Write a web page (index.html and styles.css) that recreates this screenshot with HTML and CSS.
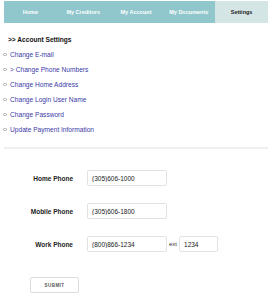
FILE: index.html
```html
<!DOCTYPE html>
<html>
<head>
<meta charset="utf-8">
<link rel="stylesheet" href="styles.css">
</head>
<body>
<nav class="nav">
  <a class="tab">Home</a>
  <a class="tab">My Creditors</a>
  <a class="tab">My Account</a>
  <a class="tab">My Documents</a>
  <a class="tab active">Settings</a>
</nav>
<section class="menu">
  <div class="menu-title">&gt;&gt; Account Settings</div>
  <ul class="links">
    <li><a>Change E-mail</a></li>
    <li><a>&gt; Change Phone Numbers</a></li>
    <li><a>Change Home Address</a></li>
    <li><a>Change Login User Name</a></li>
    <li><a>Change Password</a></li>
    <li><a>Update Payment Information</a></li>
  </ul>
</section>
<hr class="divider">
<form class="form">
  <div class="row">
    <label class="label">Home Phone</label>
    <input class="field" value="(305)606-1000">
  </div>
  <div class="row">
    <label class="label">Mobile Phone</label>
    <input class="field" value="(305)606-1800">
  </div>
  <div class="row">
    <label class="label">Work Phone</label>
    <input class="field" value="(800)866-1234">
    <span class="ext">ext</span>
    <input class="field small" value="1234">
  </div>
  <button type="button" class="submit">SUBMIT</button>
</form>
</body>
</html>
```
FILE: styles.css
```css
html, body { margin: 0; padding: 0; background: #fff; }
body { font-family: "Liberation Sans", Arial, sans-serif; color: #222; }

.nav {
  display: grid;
  grid-template-columns: repeat(5, 1fr);
  margin: 1px 3px 0 4px;
  height: 22px;
  background: #8fc7cc;
}
.tab {
  display: flex;
  align-items: center;
  justify-content: center;
  font-size: 5.5px;
  font-weight: bold;
  color: #fff;
}
.tab.active { background: #d4e5e5; color: #222; }

.menu { padding: 13px 0 0 3px; }
.menu-title {
  font-size: 6.6px;
  font-weight: bold;
  color: #111;
  padding-left: 5px;
  height: 8px;
  line-height: 8px;
}
.links { list-style: none; margin: 3px 0 0; padding: 0; }
.links li {
  display: flex;
  align-items: center;
  gap: 3.5px;
  height: 15px;
  font-size: 6.6px;
}
.links li::before {
  content: "";
  width: 1.6px;
  height: 1.6px;
  border: 0.7px solid #aaa;
  border-radius: 50%;
}
.links a { color: #3a3aa6; }

.divider {
  margin: 10px 3px 0 4px;
  border: 0;
  height: 2px;
  background: #f0f0f0;
}

.form {
  display: flex;
  flex-direction: column;
  gap: 17px;
  padding: 21px 0 0 0;
}
.row {
  display: flex;
  align-items: center;
  height: 16px;
}
.label {
  width: 73px;
  text-align: right;
  font-size: 6.5px;
  font-weight: bold;
  color: #222;
  margin-right: 14px;
}
.field {
  box-sizing: border-box;
  width: 80px;
  height: 16px;
  border: 1px solid #e2e2e2;
  border-radius: 2px;
  padding: 0 4px;
  font-family: "Liberation Sans", Arial, sans-serif;
  font-size: 6.5px;
  color: #222;
  outline: none;
}
.field.small { width: 39px; margin-left: 2px; }
.ext { font-size: 6px; color: #333; margin-left: 2px; }

.submit {
  align-self: flex-start;
  margin: 8px 0 0 30px;
  width: 49px;
  height: 16px;
  background: #fff;
  border: 1px solid #dcdcdc;
  border-radius: 2px;
  font-family: "Liberation Sans", Arial, sans-serif;
  font-size: 4.5px;
  font-weight: bold;
  letter-spacing: 0.5px;
  color: #555;
  padding: 0;
}
```
